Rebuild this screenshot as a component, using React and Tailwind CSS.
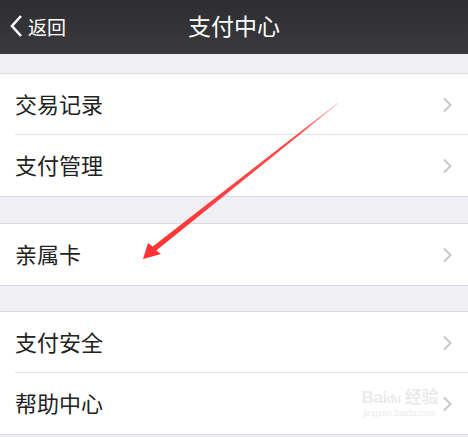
import React from 'react';

const Chevron = () => (
  <svg width="10" height="16" viewBox="0 0 10 16" className="shrink-0">
    <path d="M2 1.5 L8.5 8 L2 14.5" fill="none" stroke="#c7c7cc" strokeWidth="2" />
  </svg>
);

const Row = ({ label, divider, children }) => (
  <div className="relative flex items-center h-[61px] pl-[15px] pr-[16px]">
    <div className="flex-1 text-[22px] text-[#222222] leading-none pb-[3px]">{label}</div>
    {children}
    <Chevron />
    {divider && <div className="absolute left-[15px] right-0 bottom-0 h-px bg-[#e3e3e6]" />}
  </div>
);

const Section = ({ children }) => (
  <div className="bg-white border-y border-[#dcdce0]">{children}</div>
);

const App = () => {
  return (
    <div className="relative w-[468px] h-[437px] overflow-hidden bg-[#efeff4]" style={{ fontFamily: '"Noto Sans CJK SC", "Noto Sans", sans-serif' }}>
      <div className="relative h-[54px] bg-gradient-to-b from-[#2e2e31] to-[#3a3a3e] flex items-center justify-center">
        <div className="absolute left-[9px] top-0 h-full flex items-center text-white pb-[2px]">
          <svg width="15" height="24" viewBox="0 0 15 24">
            <path d="M12 2 L3 12 L12 22" fill="none" stroke="white" strokeWidth="2.6" />
          </svg>
          <span className="ml-[4px] text-[19px] leading-none">返回</span>
        </div>
        <div className="text-white text-[23px] leading-none pb-[3px]">支付中心</div>
      </div>

      <div className="h-[19px]" />
      <Section>
        <Row label="交易记录" divider />
        <Row label="支付管理" />
      </Section>

      <div className="h-[26px]" />
      <Section>
        <Row label="亲属卡" />
      </Section>

      <div className="h-[25px]" />
      <Section>
        <Row label="支付安全" divider />
        <Row label="帮助中心">
          <div className="mr-[4px] flex flex-col items-center leading-none text-[#ebebeb]">
            <span className="text-[17px] font-bold tracking-tight" style={{ fontFamily: '"Liberation Sans", "Noto Sans CJK SC", sans-serif' }}>Bai<span className="text-[12px]">du</span> 经验</span>
            <span className="text-[9px] mt-[3px]" style={{ fontFamily: '"Liberation Sans", sans-serif' }}>jingyan.baidu.com</span>
          </div>
        </Row>
      </Section>

      <svg className="absolute left-0 top-0 pointer-events-none" width="468" height="437" viewBox="0 0 468 437">
        <defs>
          <linearGradient id="arrowFade" x1="338" y1="103" x2="150" y2="250" gradientUnits="userSpaceOnUse">
            <stop offset="0" stopColor="#ff4a4a" stopOpacity="0.2" />
            <stop offset="0.2" stopColor="#ff3b3b" stopOpacity="0.9" />
            <stop offset="1" stopColor="#ff3333" />
          </linearGradient>
        </defs>
        <polygon
          points="337.6,102.7 338.4,103.4 156.3,250.6 161,254 143,259 148,243 152.8,246.4"
          fill="url(#arrowFade)"
        />
      </svg>
    </div>
  );
};

export default App;
